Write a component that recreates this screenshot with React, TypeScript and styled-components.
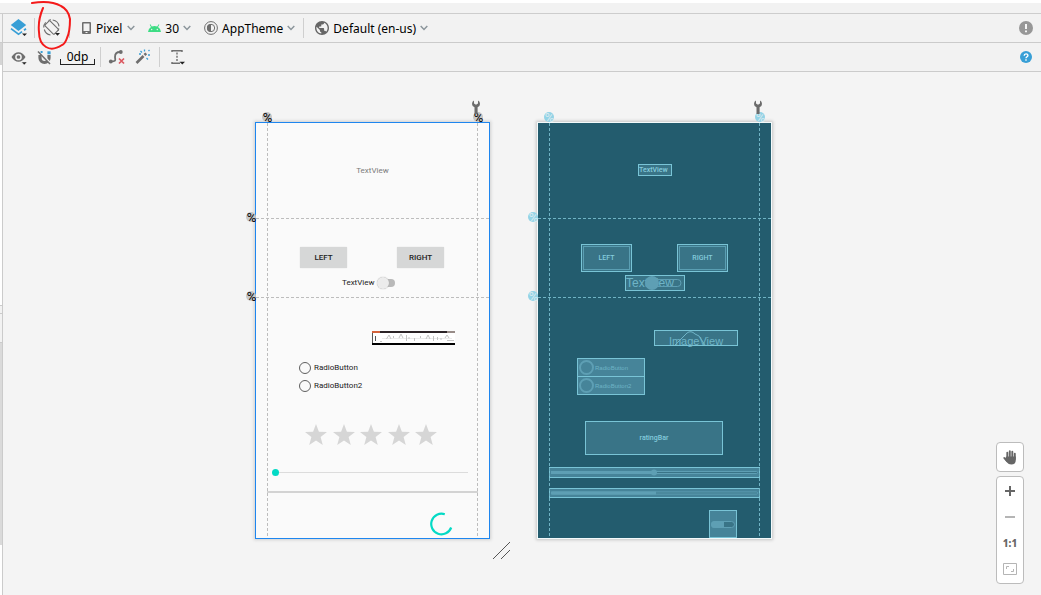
import React from "react";
import styled, { createGlobalStyle, css } from "styled-components";

const GlobalStyle = createGlobalStyle`
  html, body, #root { height: 100%; }
  body { margin: 0; background: #fff; }
  *, *::before, *::after { box-sizing: border-box; }
  button { border: 0; padding: 0; background: none; font: inherit; color: inherit; }
  svg { display: block; flex: none; }
`;

/* ---------- Frame ---------- */

const Page = styled.div`
  position: relative;
  display: flex;
  flex-direction: column;
  min-height: 100%;
  overflow: hidden;
  font-family: "Noto Sans", "Open Sans", sans-serif;
  font-size: 12px;
  line-height: 18px;
  color: #000;
`;

const TitleStrip = styled.div`
  height: 14px;
  border-top: 3px solid #fff;
  border-bottom: 1px solid #cdcdcd;
  background: #f2f2f2;
`;

const Body = styled.div`
  flex: 1;
  display: flex;
`;

const Gutter = styled.div`
  display: flex;
  flex-direction: column;
  width: 3px;
  border-right: 1px solid #cbcbcb;
`;

const Segment = styled.div<{ $height: number; $color: string; $line?: boolean }>`
  height: ${(p) => p.$height}px;
  background: ${(p) => p.$color};
  border-bottom: ${(p) => (p.$line ? "1px solid #cbcbcb" : "0")};
`;

const Editor = styled.main`
  flex: 1;
  display: flex;
  flex-direction: column;
`;

/* ---------- Toolbars ---------- */

const Toolbar = styled.div`
  display: flex;
  align-items: center;
  height: 29px;
  padding: 0 6px 0 7px;
  background: #f2f2f2;
  border-bottom: 1px solid #cbcbcb;
`;

const Separator = styled.span`
  width: 1px;
  height: 20px;
  background: #cfcfcf;
`;

const IconButton = styled.button`
  display: flex;
  align-items: center;
  justify-content: center;
  width: 18px;
  height: 20px;
`;

const Tools = styled.div<{ $gap: number; $before?: number }>`
  display: flex;
  align-items: center;
  gap: ${(p) => p.$gap}px;
  margin-left: ${(p) => p.$before ?? 0}px;
`;

const Dropdown = styled.button<{ $gap?: number }>`
  display: flex;
  align-items: center;
  gap: ${(p) => p.$gap ?? 4}px;
  height: 20px;
  white-space: nowrap;
`;

const Caption = styled.span`
  padding-top: 2px;
`;

const Spacer = styled.span`
  flex: 1;
`;

const MarginButton = styled.button`
  position: relative;
  width: 35px;
  height: 20px;
  line-height: 18px;
  text-align: center;

  &::after {
    content: "";
    position: absolute;
    left: 0;
    right: 0;
    bottom: 2px;
    height: 6px;
    border: 1px solid #222;
    border-top: 0;
  }
`;

/* ---------- Design surface ---------- */

const Surface = styled.section`
  position: relative;
  flex: 1;
  display: flex;
  align-items: flex-start;
  gap: 47px;
  padding: 50px 0 24px 252px;
  background: #f4f4f4;
`;

const Screen = styled.div<{ $blueprint?: boolean }>`
  position: relative;
  display: flex;
  flex-direction: column;
  width: 235px;
  height: 417px;
  border: 1px solid ${(p) => (p.$blueprint ? "#f3fafb" : "#1e86ef")};
  background: ${(p) => (p.$blueprint ? "#235c6e" : "#fafafa")};
  box-shadow: 0 0 3px 1px ${(p) => (p.$blueprint ? "#c4c4c4" : "#cfcfcf")};
  font-family: Roboto, sans-serif;
  font-size: 8px;
  line-height: 12px;
  color: ${(p) => (p.$blueprint ? "#7cc3d4" : "#222")};
`;

const Row = styled.div<{ $above: number; $height: number; $indent?: number; $gap?: number }>`
  display: flex;
  flex: none;
  align-items: center;
  justify-content: ${(p) => (p.$indent === undefined ? "center" : "flex-start")};
  gap: ${(p) => p.$gap ?? 0}px;
  height: ${(p) => p.$height}px;
  margin-top: ${(p) => p.$above}px;
  padding-left: ${(p) => p.$indent ?? 0}px;
`;

const Muted = styled.span`
  color: #7b7b7b;
`;

const PreviewButton = styled.button`
  width: 47px;
  height: 21px;
  border-radius: 1px;
  background: #d6d7d7;
  box-shadow: 0 0 1px #c4c4c4;
  font-weight: 500;
`;

const Switch = styled.input`
  appearance: none;
  position: relative;
  width: 18px;
  height: 12px;
  margin: 0;

  &::before {
    content: "";
    position: absolute;
    inset: 2px 0 2px 4px;
    border-radius: 4px;
    background: #b9b9b9;
  }

  &::after {
    content: "";
    position: absolute;
    left: 0;
    top: 0;
    width: 12px;
    height: 12px;
    border-radius: 50%;
    background: #ececec;
    box-shadow: 0 0 1px #999;
  }
`;

const RadioLabel = styled.label`
  display: flex;
  align-items: center;
  gap: 3px;
  height: 18px;
`;

const Radio = styled.input`
  appearance: none;
  width: 12px;
  height: 12px;
  margin: 0;
  border: 1px solid #5f5f5f;
  border-radius: 50%;
`;

const RadioGroup = styled.div`
  margin: 14px 0 0 43px;
`;

const Stars = styled.div`
  display: flex;
  justify-content: space-between;
  width: 132px;
`;

const Seek = styled.input`
  appearance: none;
  width: 196px;
  height: 8px;
  margin: 0;
  background: linear-gradient(#dcdcdc, #dcdcdc) center / 100% 1px no-repeat;

  &::-webkit-slider-thumb {
    appearance: none;
    width: 7px;
    height: 7px;
    border-radius: 50%;
    background: #03dac5;
  }
`;

const Progress = styled.div`
  width: 211px;
  height: 2px;
  background: #d3d3d3;
`;

/* ---------- Guidelines and their badges ---------- */

const Guide = styled.i<{ $axis: "x" | "y"; $at: number; $blueprint?: boolean }>`
  position: absolute;
  pointer-events: none;
  --ink: ${(p) => (p.$blueprint ? "#6fb3c4" : "#bdbdbd")};
  ${(p) =>
    p.$axis === "x"
      ? css`
          top: 0;
          bottom: 0;
          left: ${p.$at}px;
          width: 1px;
          background: repeating-linear-gradient(180deg, var(--ink) 0 3px, transparent 3px 5px);
        `
      : css`
          left: 0;
          right: 0;
          top: ${p.$at}px;
          height: 1px;
          background: repeating-linear-gradient(90deg, var(--ink) 0 3px, transparent 3px 5px);
        `}
`;

const Badge = styled.span<{ $x: number; $y: number; $blueprint?: boolean }>`
  position: absolute;
  display: flex;
  justify-content: center;
  left: ${(p) => p.$x}px;
  top: ${(p) => p.$y}px;
  width: 10px;
  height: 10px;
  border-radius: 50%;
  background: ${(p) => (p.$blueprint ? "#93d3e6" : "#c6c6c6")};
  color: ${(p) => (p.$blueprint ? "#d9eaef" : "#000")};
  font: 13px/11px Roboto, sans-serif;
  padding-left: 1px;
`;

const WrenchSpot = styled.span<{ $x: number }>`
  position: absolute;
  left: ${(p) => p.$x}px;
  top: -23px;
`;

/* ---------- Blueprint parts ---------- */

const Block = styled.div<{ $w: number; $h: number; $inset?: boolean; $bright?: boolean; $start?: boolean }>`
  position: relative;
  display: flex;
  flex: none;
  align-items: center;
  justify-content: ${(p) => (p.$start ? "flex-start" : "center")};
  width: ${(p) => p.$w}px;
  height: ${(p) => p.$h}px;
  border: 1px solid #79c4d6;
  background: ${(p) => (p.$bright ? "#468499" : "#397487")};
  box-shadow: ${(p) => (p.$inset ? "inset 0 0 0 1px #397487, inset 0 0 0 2px #5b9fb3" : "none")};
  white-space: nowrap;
`;

const BlockText = styled.span`
  font-family: Roboto, sans-serif;
  font-size: 7px;
  font-weight: 500;
  color: #84cbdc;
`;

const ViewName = styled.span<{ $low?: boolean }>`
  font-family: "Liberation Sans", sans-serif;
  font-size: ${(p) => (p.$low ? 11 : 12)}px;
  padding-top: ${(p) => (p.$low ? 6 : 0)}px;
  color: #6fb4c7;
`;

const BlockRadio = styled.div`
  display: flex;
  align-items: center;
  gap: 1px;
  width: 68px;
  height: 19px;
  padding-left: 1px;
  border: 1px solid #79c4d6;
  background: #468499;
  font: 6px/12px "Liberation Sans", sans-serif;
  color: #6fb3c6;

  & + & { margin-top: -1px; }
  &::before {
    content: "";
    width: 15px;
    height: 15px;
    border: 2px solid #5e9fb4;
    border-radius: 50%;
  }
`;

const BlockRadios = styled.div`
  margin: 12px 0 0 39px;
`;

const Overlay = styled.svg`
  position: absolute;
  left: 0;
  top: 0;
`;

/* ---------- Zoom controls ---------- */

const ZoomControls = styled.div`
  position: absolute;
  right: 17px;
  bottom: 11px;
  display: flex;
  flex-direction: column;
  gap: 4px;
`;

const ControlCard = styled.div`
  display: flex;
  flex-direction: column;
  width: 28px;
  padding: 1px 0;
  border: 1px solid #bcbcbc;
  border-radius: 4px;
  background: #fff;
`;

const ControlButton = styled.button`
  display: flex;
  align-items: center;
  justify-content: center;
  height: 26px;
  font-weight: 800;
  font-size: 10px;
  color: #666;
`;

const Annotation = styled.svg`
  position: absolute;
  left: 0;
  top: 0;
  pointer-events: none;
`;

/* ---------- Icons ---------- */

const Chevron = () => (
  <svg width="8" height="6" viewBox="0 0 8 6" fill="none" stroke="#8b959b" strokeWidth="1.5">
    <path d="M.7 1 4 4.4 7.3 1" />
  </svg>
);

const LayersIcon = () => (
  <svg width="18" height="20" viewBox="0 0 18 20">
    <path d="M8.500 1 16.200 7 8.500 13 .8 7Z" fill="#389fd6" />
    <path d="M1 10.600 8.500 16.300 12 13.600M14 12.200 16 10.700" fill="none" stroke="#389fd6" strokeWidth="1.700" />
    <path d="M12 15.500h5l-2.500 2.500Z" fill="#222" />
  </svg>
);

const RotateIcon = () => (
  <svg width="18" height="20" viewBox="0 0 18 20" fill="none" stroke="#6e6e6e" strokeWidth="1.100">
    <rect x="5.200" y="3" width="7" height="13" rx="1" transform="rotate(-45 8.700 9.500)" />
    <path d="M1.300 11.500A7.500 7.500 0 0 0 7.500 17M.7 9.500A7.800 7.800 0 0 1 2.700 4.300M5.500 2.600A7.500 7.500 0 0 1 8 1.800M9.700 2a7.500 7.500 0 0 1 6.300 6.300M15.900 10.500 15 12.700" />
    <path d="M12 15h5l-2.500 2.700Z" fill="#222" stroke="none" />
  </svg>
);

const PhoneIcon = () => (
  <svg width="9" height="12" viewBox="0 0 9 12">
    <path fillRule="evenodd" d="M1 0h7q1 0 1 1v10q0 1-1 1H1q-1 0-1-1V1q0-1 1-1Zm.5 1.500v7.500h6V1.500ZM3.500 10v1h2v-1Z" fill="#6e6e6e" />
  </svg>
);

const AndroidIcon = () => (
  <svg width="13" height="8" viewBox="0 0 13 8">
    <path d="M0 8a6.500 6.300 0 0 1 3-5L1.700.8l.7-.5 1.400 2.200a7 7 0 0 1 5.400 0L10.600.3l.7.500L10 3a6.500 6.300 0 0 1 3 5Z" fill="#3ddc84" />
    <circle cx="3.700" cy="5.500" r=".7" fill="#f2f2f2" />
    <circle cx="9.300" cy="5.500" r=".7" fill="#f2f2f2" />
  </svg>
);

const ThemeIcon = () => (
  <svg width="14" height="14" viewBox="0 0 14 14" fill="none" stroke="#6e6e6e">
    <circle cx="7" cy="7" r="6.400" />
    <circle cx="7" cy="7" r="3.700" />
    <path d="M7 3a4 4 0 0 0 0 8Z" fill="#6e6e6e" stroke="none" />
  </svg>
);

const GlobeIcon = () => (
  <svg width="14" height="14" viewBox="2 2 20 20" fill="#666">
    <path d="M12 2C6.480 2 2 6.480 2 12s4.480 10 10 10 10-4.480 10-10S17.520 2 12 2zm-1 17.930c-3.950-.49-7-3.850-7-7.930 0-.62.08-1.210.21-1.790L9 15v1c0 1.100.9 2 2 2v1.930zm6.900-2.540c-.26-.81-1-1.390-1.900-1.390h-1v-3c0-.55-.45-1-1-1H8v-2h2c.55 0 1-.45 1-1V7h2c1.100 0 2-.9 2-2v-.41c2.930 1.190 5 4.060 5 7.410 0 2.080-.8 3.970-2.100 5.390z" />
  </svg>
);

const AlertIcon = () => (
  <svg width="14" height="14" viewBox="0 0 14 14">
    <circle cx="7" cy="7" r="7" fill="#979797" />
    <path d="M7 3v5M7 9.500v1.700" stroke="#fff" strokeWidth="1.800" />
  </svg>
);

const HelpIcon = () => (
  <svg width="12" height="12" viewBox="0 0 12 12">
    <circle cx="6" cy="6" r="6" fill="#389fd6" />
    <path d="M4.200 4.700C4.200 2.300 7.900 2.300 7.900 4.500 7.900 5.800 6 5.700 6 7.300M6 8.300v1.400" fill="none" stroke="#fff" strokeWidth="1.400" />
  </svg>
);

const EyeIcon = () => (
  <svg width="18" height="20" viewBox="0 0 18 20">
    <path d="M1.500 10Q4.300 5.200 8.500 5.200T15.500 10Q12.700 14.800 8.500 14.800T1.500 10Z" fill="#6e6e6e" />
    <circle cx="8.500" cy="10" r="2.600" fill="#6e6e6e" stroke="#f2f2f2" strokeWidth="1.500" />
    <path d="M11.500 15h5.500l-2.700 3Z" fill="#222" stroke="#f2f2f2" strokeWidth=".5" />
  </svg>
);

const MagnetIcon = () => (
  <svg width="18" height="20" viewBox="0 0 18 20" fill="none">
    <path d="M4 8v3a4.500 4.500 0 0 0 9 0V8" stroke="#6e6e6e" strokeWidth="3.200" />
    <path d="M11.400 5.800h3.200" stroke="#389fd6" strokeWidth="3" />
    <path d="m2.500 3.800 12 12.500" stroke="#f2f2f2" strokeWidth="2" />
    <path d="M2 4.500 14 17" stroke="#6e6e6e" strokeWidth="1.500" />
    <path d="M4.600 5h2" stroke="#389fd6" strokeWidth="2" />
  </svg>
);

const ClearIcon = () => (
  <svg width="18" height="20" viewBox="0 0 18 20" fill="none">
    <path d="M3 14.500C9 14.500 7 12.500 7 10S8 5 12 5" stroke="#6e6e6e" strokeWidth="1.800" />
    <circle cx="2.800" cy="14.500" r="1.900" fill="#6e6e6e" />
    <circle cx="12.800" cy="5" r="1.900" fill="#6e6e6e" />
    <path d="m11 11.500 5 5M16 11.500l-5 5" stroke="#db5860" strokeWidth="1.700" />
  </svg>
);

const WandIcon = () => (
  <svg width="18" height="20" viewBox="0 0 18 20" fill="none">
    <path d="m2.500 16 7-7" stroke="#6e6e6e" strokeWidth="2.600" />
    <path d="m10.500 8 1.700-1.700" stroke="#6e6e6e" strokeWidth="2.600" />
    <path d="M6.500 4 8 5.500M10.500 2.500v2M14.500 4l1-1M14 8h2M12.500 11l1.500 1.500M7 7H5" stroke="#389fd6" strokeWidth="1.300" />
  </svg>
);

const GuidelineIcon = () => (
  <svg width="18" height="20" viewBox="0 0 18 20" fill="none" stroke="#6e6e6e" strokeWidth="1.400">
    <path d="M3 5V3.700h10V5M3 15v1.300h8" />
    <path d="M8 5.500v9" strokeDasharray="2 1.200" />
    <path d="M10.500 14.800h5.500l-2.700 2.700Z" fill="#222" stroke="none" />
  </svg>
);

const WrenchIcon = () => (
  <svg width="8" height="14" viewBox="0 0 8 14">
    <path d="M2 .6v3L4 4.800 6 3.600v-3Q8 1.600 8 3.900 8 6 5.600 7.200V14H2.500V7.200Q0 6 0 3.900 0 1.600 2 .6Z" fill="#6b6b6b" />
  </svg>
);

const StarIcon = () => (
  <svg width="22" height="22" viewBox="0 0 22 22">
    <path d="m11 0 2.900 7.700 8.100.3-6.400 5.100L17.800 21 11 16.600 4.200 21l2.200-7.900L0 8l8.100-.3Z" fill="#d6d6d6" />
  </svg>
);

const Spinner = () => (
  <svg width="24" height="24" viewBox="0 0 24 24" fill="none" stroke="#03dac5" strokeWidth="2.200">
    <path d="M15.800 2.200A10.300 10.300 0 1 0 22.200 15.500" />
  </svg>
);

const PictureStrip = () => (
  <svg width="83" height="14" viewBox="0 0 83 14">
    <path d="M0 1h83v12H0Z" fill="#fff" />
    <path d="M0 0h83v2H0Z" fill="#2b2326" />
    <path d="M0 0h8v2H0Z" fill="#d3633c" />
    <path d="M75 0h8v2h-8Z" fill="#978b87" />
    <path d="M0 12h83v2H0Z" fill="#000" />
    <path d="M.5 2v10M3.500 5v5" stroke="#555" fill="none" />
    <g fill="none" stroke="#c4c4c4" strokeWidth="1">
      <path d="M10 7.500h70" stroke="#ececec" />
      <path d="M34.500 4v6M61.500 5v5M14.500 8 17 4l2 4M27 7l2-4 2 4M21.500 5v2M37 8V6M42.500 7v3M48.500 5v2M54 8l2-4 2 4M65.500 6v3M69 7v2M73 7l2-3 2 3M8 10.500h2M75 9.500h7" />
    </g>
  </svg>
);

const HandIcon = () => (
  <svg width="14" height="15" viewBox="0 0 14 15">
    <g stroke="#666" strokeWidth="1.900" strokeLinecap="round" fill="none">
      <path d="M4.300 8V2.600M6.800 8V1.200M9.300 8V1.800M11.800 9V3.800M1.300 8l2.500 3" />
    </g>
    <path d="M3.400 6.500h9.400V10q0 4.500-4.600 4.500Q5.500 14.500 4 12.500L1.600 9Z" fill="#666" />
  </svg>
);

/* ---------- Screens ---------- */

const Guides = ({ blueprint }: { blueprint?: boolean }) => (
  <>
    <Guide $axis="x" $at={11} $blueprint={blueprint} />
    <Guide $axis="x" $at={221} $blueprint={blueprint} />
    <Guide $axis="y" $at={95} $blueprint={blueprint} />
    <Guide $axis="y" $at={174} $blueprint={blueprint} />
    {[[6, -11], [217, -11], [-10, 89], [-10, 168]].map(([x, y]) => (
      <Badge key={`${x} ${y}`} $x={x} $y={y} $blueprint={blueprint}>%</Badge>
    ))}
    <WrenchSpot $x={216}><WrenchIcon /></WrenchSpot>
  </>
);

const DesignScreen = () => (
  <Screen>
    <Row $above={42} $height={12}><Muted>TextView</Muted></Row>
    <Row $above={70} $height={21} $gap={50} $indent={44}>
      <PreviewButton>LEFT</PreviewButton>
      <PreviewButton>RIGHT</PreviewButton>
    </Row>
    <Row as="label" $above={7} $height={16} $indent={86} $gap={2}>
      TextView
      <Switch type="checkbox" role="switch" />
    </Row>
    <Row $above={40} $height={14} $indent={116}><PictureStrip /></Row>
    <RadioGroup>
      <RadioLabel><Radio type="radio" name="choice" />RadioButton</RadioLabel>
      <RadioLabel><Radio type="radio" name="choice" />RadioButton2</RadioLabel>
    </RadioGroup>
    <Row $above={26} $height={28} $indent={49}>
      <Stars>{[1, 2, 3, 4, 5].map((n) => <StarIcon key={n} />)}</Stars>
    </Row>
    <Row $above={18} $height={11} $indent={16}>
      <Seek type="range" min={0} max={100} defaultValue={0} aria-label="Seek bar" />
    </Row>
    <Row $above={13} $height={2} $indent={11}><Progress role="progressbar" /></Row>
    <Row $above={19} $height={24} $indent={173}><Spinner /></Row>
    <Guides />
  </Screen>
);

const BlueprintScreen = () => (
  <Screen $blueprint>
    <Row $above={41} $height={12} $indent={100}>
      <Block $w={34} $h={12} $start><BlockText>TextView</BlockText></Block>
    </Row>
    <Row $above={68} $height={28} $indent={43} $gap={45}>
      <Block $w={51} $h={28} $inset><BlockText>LEFT</BlockText></Block>
      <Block $w={51} $h={28} $inset><BlockText>RIGHT</BlockText></Block>
    </Row>
    <Row $above={3} $height={16} $indent={87}>
      <Block $w={60} $h={16} $start>
        <Overlay width="58" height="14" viewBox="0 0 58 14">
          <rect x="26" y="3.500" width="29" height="7" rx="3.500" fill="none" stroke="#5e9fb4" />
          <circle cx="26" cy="7" r="7" fill="#5e9fb4" />
        </Overlay>
        <ViewName>TextView</ViewName>
      </Block>
    </Row>
    <Row $above={39} $height={16} $indent={116}>
      <Block $w={84} $h={16}>
        <Overlay width="82" height="14" viewBox="0 0 82 14">
          <path d="M20 14 32 2Q36-1 40 3L44 5 50 14" fill="none" stroke="#6fb4c7" />
        </Overlay>
        <ViewName $low>ImageView</ViewName>
      </Block>
    </Row>
    <BlockRadios>
      <BlockRadio>RadioButton</BlockRadio>
      <BlockRadio>RadioButton2</BlockRadio>
    </BlockRadios>
    <Row $above={26} $height={34} $indent={47}>
      <Block $w={138} $h={34}><BlockText>ratingBar</BlockText></Block>
    </Row>
    <Row $above={12} $height={11} $indent={11}>
      <Block $w={211} $h={11} $bright>
        <svg width="207" height="7" viewBox="0 0 207 7">
          <rect x=".5" y="2.500" width="206" height="2" rx="1" fill="#397487" stroke="#5e9fb4" />
          <path d="M0 2h103v3H0Z" fill="#5e9fb4" />
          <circle cx="103" cy="3.500" r="3" fill="#5e9fb4" />
        </svg>
      </Block>
    </Row>
    <Row $above={10} $height={10} $indent={11}>
      <Block $w={211} $h={10} $bright>
        <svg width="207" height="6" viewBox="0 0 207 6">
          <rect x=".5" y="2" width="206" height="2" rx="1" fill="#397487" stroke="#5e9fb4" />
          <path d="M0 1.500h105v3H0Z" fill="#5e9fb4" />
        </svg>
      </Block>
    </Row>
    <Row $above={12} $height={28} $indent={171}>
      <Block $w={28} $h={28} $bright>
        <svg width="24" height="7" viewBox="0 0 24 7">
          <rect x=".5" y=".5" width="23" height="6" rx="3" fill="#397487" stroke="#5e9fb4" />
          <path d="M3.500 0H13v7H3.500a3.500 3.500 0 0 1 0-7Z" fill="#5e9fb4" />
        </svg>
      </Block>
    </Row>
    <Guides blueprint />
  </Screen>
);

const ResizeHandle = styled.svg`
  position: absolute;
  left: 489px;
  top: 469px;
`;

export default function App() {
  return (
    <Page>
      <GlobalStyle />
      <TitleStrip />
      <Body>
        <Gutter>
          <Segment $height={29} $color="#f2f2f2" $line />
          <Segment $height={22} $color="#d5d5d5" />
          <Segment $height={241} $color="#fff" $line />
          <Segment $height={8} $color="#f2f2f2" $line />
          <Segment $height={29} $color="#f2f2f2" $line />
          <Segment $height={202} $color="#dadada" />
        </Gutter>
        <Editor>
          <Toolbar>
            <IconButton aria-label="Design surface"><LayersIcon /></IconButton>
            <Tools $gap={8} $before={6}>
              <Separator />
              <IconButton aria-label="Orientation"><RotateIcon /></IconButton>
              <Separator />
            </Tools>
            <Tools $gap={13} $before={12}>
              <Dropdown $gap={5}><PhoneIcon /><Caption>Pixel</Caption><Chevron /></Dropdown>
              <Dropdown><AndroidIcon /><Caption>30</Caption><Chevron /></Dropdown>
              <Dropdown><ThemeIcon /><Caption>AppTheme</Caption><Chevron /></Dropdown>
            </Tools>
            <Tools $gap={11} $before={8}>
              <Separator />
              <Dropdown><GlobeIcon /><Caption>Default (en-us)</Caption><Chevron /></Dropdown>
            </Tools>
            <Spacer />
            <IconButton aria-label="Warnings"><AlertIcon /></IconButton>
          </Toolbar>
          <Toolbar>
            <Tools $gap={8}>
              <IconButton aria-label="View options"><EyeIcon /></IconButton>
              <IconButton aria-label="Autoconnect"><MagnetIcon /></IconButton>
            </Tools>
            <Tools $gap={5} $before={6}>
              <MarginButton>0dp</MarginButton>
              <Separator />
            </Tools>
            <Tools $gap={8} $before={7}>
              <IconButton aria-label="Clear constraints"><ClearIcon /></IconButton>
              <IconButton aria-label="Infer constraints"><WandIcon /></IconButton>
            </Tools>
            <Tools $gap={9} $before={7}>
              <Separator />
              <IconButton aria-label="Guidelines"><GuidelineIcon /></IconButton>
            </Tools>
            <Spacer />
            <IconButton aria-label="Help"><HelpIcon /></IconButton>
          </Toolbar>
          <Surface>
            <DesignScreen />
            <BlueprintScreen />
            <ResizeHandle width="19" height="19" viewBox="0 0 19 19" stroke="#555" fill="none">
              <path d="M1 18 18 1M9 18l9-9" />
            </ResizeHandle>
            <ZoomControls>
              <ControlCard>
                <ControlButton aria-label="Pan"><HandIcon /></ControlButton>
              </ControlCard>
              <ControlCard>
                <ControlButton aria-label="Zoom in">
                  <svg width="10" height="10" stroke="#666" strokeWidth="2"><path d="M5 0v10M0 5h10" /></svg>
                </ControlButton>
                <ControlButton aria-label="Zoom out">
                  <svg width="10" height="2" stroke="#b5b5b5" strokeWidth="2"><path d="M0 1h10" /></svg>
                </ControlButton>
                <ControlButton>1:1</ControlButton>
                <ControlButton aria-label="Zoom to fit">
                  <svg width="14" height="12" fill="none" stroke="#b5b5b5">
                    <path d="M.5.500h13v11H.5ZM3.500 6V3.500H6M8 8.500h2.500V6" />
                  </svg>
                </ControlButton>
              </ControlCard>
            </ZoomControls>
          </Surface>
        </Editor>
      </Body>
      <Annotation width="80" height="56" fill="none" stroke="#f41a1a" strokeWidth="2" strokeLinecap="round" strokeLinejoin="round">
        <path d="M32 3C44 1 54 2 61 6 67 9 69 13 70 19 70 26 70 32 67 38 66 41 65 44 62 45 56 49 51 50 46 47 41 44 39 38 39 32 38 23 40 15 43 8" />
      </Annotation>
    </Page>
  );
}
